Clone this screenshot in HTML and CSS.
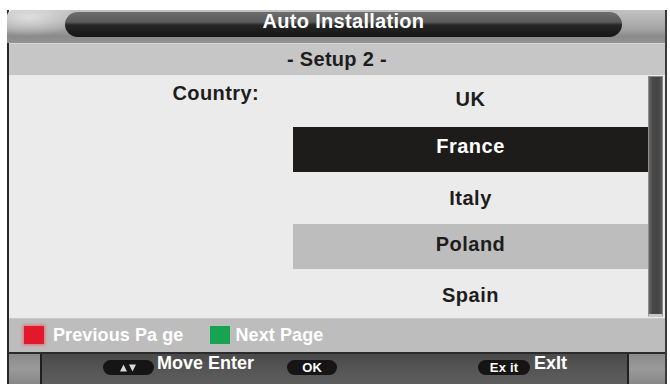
FILE: index.html
```html
<!DOCTYPE html>
<html>
<head>
<meta charset="utf-8">
<link rel="stylesheet" href="styles.css">
</head>
<body>
<div class="tv">
  <div class="header">
    <div class="pill-title">Auto Installation</div>
  </div>
  <div class="subtitle">- Setup 2 -</div>
  <div class="content">
    <div class="label-col"><span class="label">Country:</span></div>
    <div class="list">
      <div class="row first">UK</div>
      <div class="row selected">France</div>
      <div class="row">Italy</div>
      <div class="row hover">Poland</div>
      <div class="row">Spain</div>
    </div>
    <div class="scrollbar"></div>
  </div>
  <div class="colorbar">
    <span class="key red"></span><span class="key-text">Previous Pa ge</span>
    <span class="key green"></span><span class="key-text">Next Page</span>
  </div>
  <div class="bottombar">
    <div class="side left"></div>
    <div class="middle">
      <span class="btn btn-arrows">
        <svg class="arrows" width="20" height="8" viewBox="0 0 20 8"><polygon points="1,7.5 4.5,0.5 8,7.5" fill="#d8d8d8"/><polygon points="10,0.5 17,0.5 13.5,7.5" fill="#d8d8d8"/></svg>
      </span>
      <span class="btn-text move">Move Enter</span>
      <span class="btn btn-ok">OK</span>
      <span class="btn btn-exit">Ex it</span>
      <span class="btn-text exit">ExIt</span>
    </div>
    <div class="side right"></div>
  </div>
</div>
</body>
</html>
```
FILE: styles.css
```css
html, body {
  margin: 0;
  padding: 0;
  background: #ffffff;
  width: 670px;
  height: 384px;
  overflow: hidden;
  font-family: "Liberation Sans", Arial, sans-serif;
  font-weight: bold;
}

.tv {
  margin-left: 7px;
  margin-top: 10px;
  width: 656px;
  height: 374px;
  border-left: 2px solid #262626;
  border-right: 2px solid #3a3a3a;
  display: flex;
  flex-direction: column;
}

.header {
  height: 33px;
  margin-left: -2px;
  box-sizing: border-box;
  padding: 2px 43px 0 58px;
  background:
    radial-gradient(ellipse 50px 18px at 22px 8px, rgba(255,255,255,0.55), rgba(255,255,255,0) 100%),
    linear-gradient(to bottom, #c2c2c2 0%, #a6a6a6 55%, #8a8a8a 80%, #959595 100%);
  border-top-left-radius: 6px;
}

.pill-title {
  height: 25px;
  border-radius: 13px;
  background: linear-gradient(to bottom, #6e6e6e 0%, #5a5a5a 40%, #262626 52%, #161616 100%);
  color: #ffffff;
  font-size: 20px;
  line-height: 18px;
  text-align: center;
  letter-spacing: 0.3px;
}

.subtitle {
  height: 32px;
  background: #c6c6c6;
  border-top: 1px solid #d6d6d6;
  box-sizing: border-box;
  color: #1d1d1d;
  font-size: 20px;
  line-height: 30px;
  text-align: center;
  letter-spacing: 0.3px;
}

.content {
  height: 243px;
  background: #ebebeb;
  display: flex;
}

.label-col {
  width: 284px;
  box-sizing: border-box;
  padding-right: 34px;
  padding-top: 7px;
  text-align: right;
}

.label {
  font-size: 20px;
  line-height: 22px;
  color: #1d1d1d;
  letter-spacing: 0.4px;
}

.list {
  width: 355px;
  padding-top: 3.5px;
}

.row {
  height: 45px;
  margin-bottom: 3.5px;
  text-align: center;
  font-size: 20px;
  line-height: 46px;
  color: #1d1d1d;
  letter-spacing: 0.5px;
}

.row.first {
  line-height: 42px;
}

.row.selected {
  background: #1e1b1b;
  color: #ffffff;
  line-height: 39px;
}

.row.hover {
  background: #bdbdbd;
  line-height: 41px;
}

.scrollbar {
  width: 13px;
  margin: 1px 0 1px 0;
  background: linear-gradient(to right, #6a6a6a 0%, #4a4a4a 25%, #444 70%, #575757 100%);
  border: 1px solid #8a8a8a;
  border-bottom: 3px solid #c8c8c8;
}

.colorbar {
  height: 34px;
  background: #bdbdbd;
  border-top: 1px solid #c9c9c9;
  border-bottom: 2px solid #2b2b2b;
  display: flex;
  align-items: center;
  padding-left: 15px;
  color: #ffffff;
  font-size: 18px;
}

.key {
  display: inline-block;
  width: 20px;
  height: 18px;
  margin-right: 9px;
}

.key.red {
  background: #e3192b;
  box-shadow: 0 0 3px 1px rgba(240, 60, 80, 0.6);
}

.key.green {
  background: #16a352;
  margin-left: 27px;
  margin-right: 5px;
}

.key-text {
  letter-spacing: 0.1px;
}

.bottombar {
  height: 30px;
  display: flex;
  background: linear-gradient(to bottom, #4a4a4a 0%, #555 50%, #5e5e5e 100%);
}

.side {
  background: linear-gradient(to bottom, #8a8a8a 0%, #9a9a9a 50%, #878787 100%);
}

.side.left {
  width: 31px;
  border-right: 2px solid #1f1f1f;
}

.side.right {
  width: 36px;
  border-left: 2px solid #1f1f1f;
}

.middle {
  flex: 1;
  display: flex;
  align-items: flex-start;
  padding-left: 61px;
  color: #ffffff;
}

.btn {
  display: inline-flex;
  align-items: center;
  justify-content: center;
  height: 15px;
  margin-top: 6px;
  border-radius: 8px;
  background: #151515;
  color: #ffffff;
  font-size: 12px;
  line-height: 16px;
}

.btn-arrows {
  width: 51px;
}

.arrows {
  display: block;
}

.btn-ok {
  width: 50px;
  margin-left: 33px;
  font-size: 13px;
}

.btn-exit {
  width: 52px;
  margin-left: 141px;
  font-size: 13px;
  letter-spacing: 0.2px;
}

.btn-text {
  font-size: 18px;
  line-height: 17px;
  margin-top: 1px;
}

.btn-text.move {
  margin-left: 3px;
}

.btn-text.exit {
  margin-left: 4px;
  font-size: 18px;
}
```
